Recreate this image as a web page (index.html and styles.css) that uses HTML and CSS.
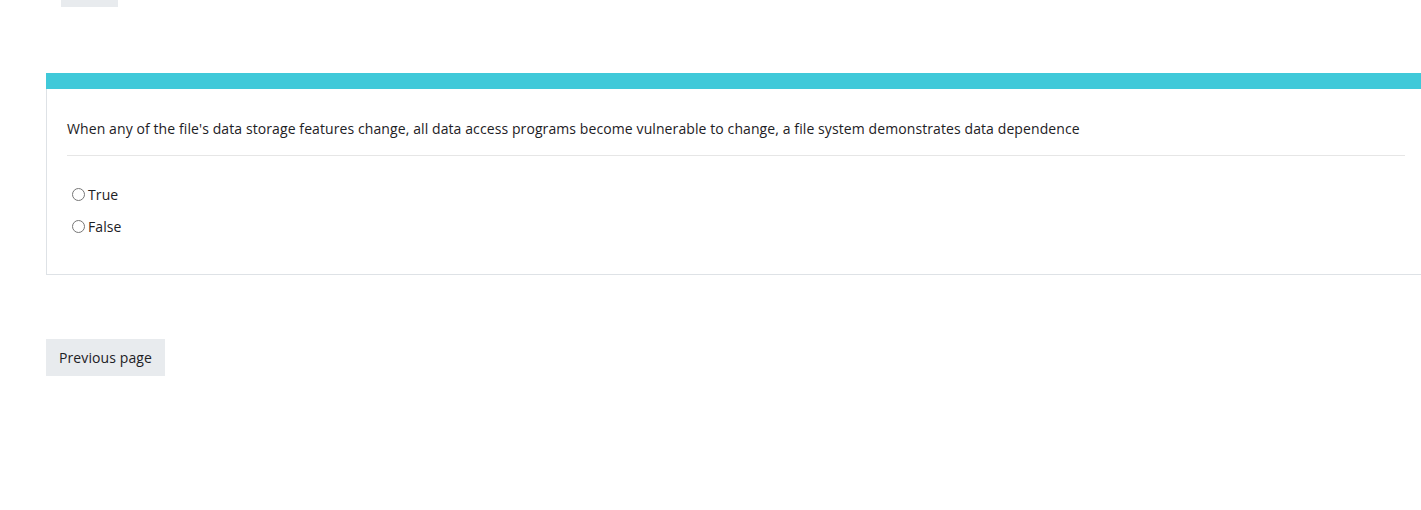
FILE: index.html
```html
<!DOCTYPE html>
<html>
<head>
<meta charset="utf-8">
<link rel="stylesheet" href="styles.css">
</head>
<body>
<div class="page">
  <div class="top-stub"></div>
  <div class="card">
    <div class="card-bar"></div>
    <div class="card-body">
      <p class="question">When any of the file's data storage features change, all data access programs become vulnerable to change, a file system demonstrates data dependence</p>
      <hr class="sep">
      <div class="options">
        <label class="opt"><input type="radio" name="q1"><span>True</span></label>
        <label class="opt"><input type="radio" name="q1"><span>False</span></label>
      </div>
    </div>
  </div>
  <div class="nav">
    <button class="btn">Previous page</button>
  </div>
</div>
</body>
</html>
```
FILE: styles.css
```css
html, body {
  margin: 0;
  padding: 0;
  background: #fff;
}
body {
  font-family: "Segoe UI", "Open Sans", "Noto Sans", sans-serif;
  font-size: 14px;
  color: #1d2125;
  overflow: hidden;
}
.page {
  padding-left: 46px;
}
.top-stub {
  margin-left: 15px;
  width: 57px;
  height: 7px;
  background: #e8ebee;
}
.card {
  margin-top: 66px;
  width: 1378px;
  border: 1px solid #dee2e6;
  border-top: none;
}
.card-bar {
  height: 16px;
  background: #40c9d9;
  margin-left: -1px;
  margin-right: -1px;
}
.card-body {
  padding: 29px 20px 37px 20px;
}
.question {
  margin: 0;
  line-height: 21px;
  letter-spacing: 0.095px;
}
.sep {
  border: none;
  border-top: 1px solid #e6e6e6;
  margin: 16px 0 28px 0;
}
.options {
  display: flex;
  flex-direction: column;
  gap: 11px;
  padding-left: 4px;
}
.opt {
  display: flex;
  align-items: center;
  height: 21px;
  letter-spacing: 0.1px;
}
.opt input {
  margin: 0 3px 0 1px;
  width: 13px;
  height: 13px;
}
.nav {
  margin-top: 64px;
}
.btn {
  font-family: inherit;
  font-size: 14px;
  color: #1d2125;
  background: #e8ebee;
  border: none;
  height: 37px;
  padding: 0 13px;
  border-radius: 0;
  letter-spacing: 0.1px;
}
```
